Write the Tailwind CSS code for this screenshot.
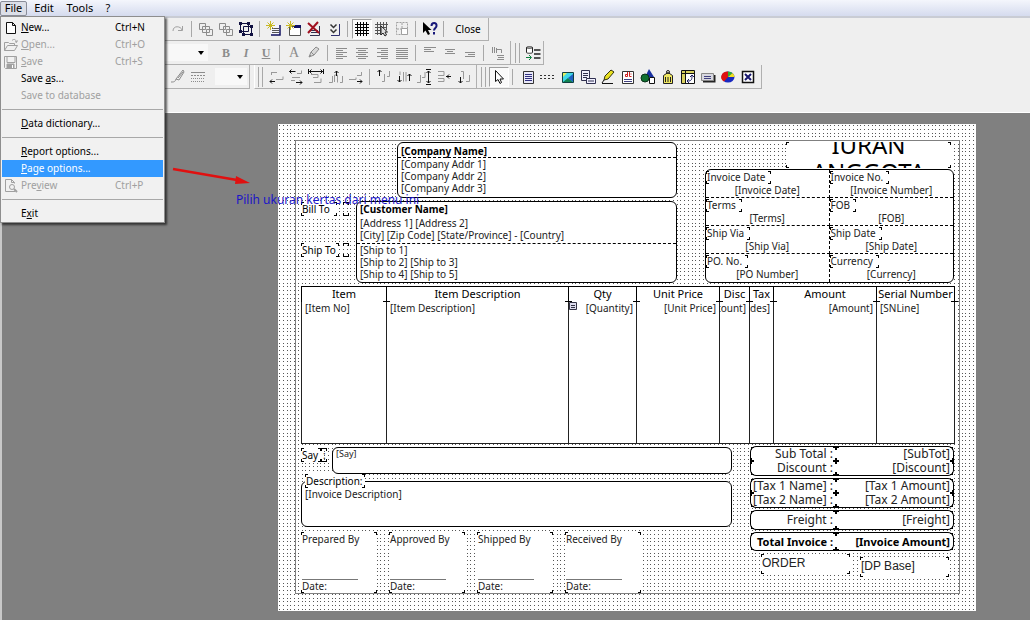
<!DOCTYPE html>
<html lang="en">
<head>
  <meta charset="UTF-8">
  <meta name="viewport" content="width=device-width, initial-scale=1.0">
  <title>Report Designer</title>
  <script src="https://cdn.jsdelivr.net/npm/@tailwindcss/browser@4"></script>
</head>
<body class="h-screen flex flex-col overflow-hidden bg-[#efefef] font-['Noto_Sans',sans-serif] text-[10px] leading-3 text-black">

  <!-- Menu bar -->
  <nav class="relative z-20 h-4 shrink-0 flex items-center bg-linear-to-b from-[#f4f6fc] to-[#d5dbee] text-[11px]">
    <button class="h-[15px] w-[27px] rounded-xs border border-[#8a8d99] bg-[#dcdfe8]">File</button>
    <button class="h-[15px] w-[34px]">Edit</button>
    <button class="h-[15px] w-[38px]">Tools</button>
    <button class="h-[15px] w-[18px]">?</button>

    <!-- File menu -->
    <div role="menu" class="absolute left-0 top-4 w-[165px] border border-[#8e8e8e] bg-[#f1f1f1] p-px pt-0.5 pb-0 text-[10px] leading-[17px] shadow-[2px_2px_2px_rgba(0,0,0,0.6)]">
      <button role="menuitem" class="flex w-full items-center">
        <svg class="ml-0.5 mr-[3px] size-[14px]" viewBox="0 0 14 14" fill="#fff" stroke="#111"><path d="M2.5 1.5h6l3 3v8h-9zM8.5 1.5v3h3"/></svg>
        <span class="w-[94px] text-left"><u>N</u>ew...</span><span>Ctrl+N</span>
      </button>
      <button role="menuitem" disabled class="flex w-full items-center text-[#a0a0a0]">
        <svg class="ml-0.5 mr-[3px] size-[14px]" viewBox="0 0 14 14" fill="none" stroke="#a0a0a0"><path d="M.5 12.5v-8h4l1 1h5v2M.5 12.5l3-5h10l-3 5zM8 2.5c2-2 4-1 4.500 1.500M11 3.500l1.500 1L13.500 2.500"/></svg>
        <span class="w-[94px] text-left"><u>O</u>pen...</span><span>Ctrl+O</span>
      </button>
      <button role="menuitem" disabled class="flex w-full items-center text-[#a0a0a0]">
        <svg class="ml-0.5 mr-[3px] size-[14px]" viewBox="0 0 14 14" fill="none" stroke="#a0a0a0"><path d="M.5 1.5h12v12h-11l-1-1zM3 1.5v6h8v-6"/><path d="M3 9h7v4H3z" fill="#a0a0a0"/><path d="M8.5 10v3" stroke="#fff"/></svg>
        <span class="w-[94px] text-left"><u>S</u>ave</span><span>Ctrl+S</span>
      </button>
      <button role="menuitem" class="block w-full pl-[19px] text-left">Save <u>a</u>s...</button>
      <button role="menuitem" disabled class="block w-full pl-[19px] text-left text-[#a0a0a0]">Save to database</button>
      <hr class="my-[5px] border-[#a8a8a8]">
      <button role="menuitem" class="block w-full pl-[19px] text-left"><u>D</u>ata dictionary...</button>
      <hr class="my-[5px] border-[#a8a8a8]">
      <button role="menuitem" class="block w-full pl-[19px] text-left"><u>R</u>eport options...</button>
      <button role="menuitem" class="block w-full bg-[#3399ff] pl-[19px] text-left text-white"><u>P</u>age options...</button>
      <button role="menuitem" disabled class="flex w-full items-center text-[#a0a0a0]">
        <svg class="ml-0.5 mr-[3px] size-[14px]" viewBox="0 0 14 14" fill="none" stroke="#a0a0a0"><path d="M11 12.5H1.5v-12h6l3 3v1M7.5.5v3h3"/><circle cx="8" cy="8" r="2.5"/><path d="M10 10l3 3" stroke-width="2"/></svg>
        <span class="w-[94px] text-left">Pre<u>v</u>iew</span><span>Ctrl+P</span>
      </button>
      <hr class="my-[5px] border-[#a8a8a8]">
      <button role="menuitem" class="block w-full pl-[19px] text-left">E<u>x</u>it</button>
    </div>
  </nav>

  <!-- Toolbars -->
  <header class="h-[97px] shrink-0 border-t-2 border-b border-t-[#c9ccd4] border-b-[#fff]">
    <!-- Row 1: edit, bands, grid -->
    <div class="flex w-fit h-[23px] items-center border-r border-b border-[#b0b0b0] pl-[168px]">
      <button class="size-5 grid place-items-center" aria-label="Redo"><svg class="size-4" viewBox="0 0 16 16" fill="none" stroke="#a0a0a0"><path d="M3 10c0-6 8-5 9-1M12.5 5v4.500H8"/></svg></button>
      <span class="ml-[3px] mr-1 h-4 w-px bg-[#a8a8a8]"></span>
      <button class="size-5 grid place-items-center" aria-label="Bring to front"><svg class="size-4" viewBox="0 0 16 16" fill="#efefef" stroke="#8c8c8c"><path d="M1.5 2.5h6v6h-6zM8.5 8.5h6v6h-6zM4.5 5.5h7v6h-7z"/></svg></button>
      <button class="size-5 grid place-items-center" aria-label="Send to back"><svg class="size-4" viewBox="0 0 16 16" fill="#efefef" stroke="#8c8c8c"><path d="M5.5 5.5h6v6h-6zM1.5 2.5h6v6h-6zM8.5 8.5h6v6h-6z"/></svg></button>
      <button class="size-5 grid place-items-center" aria-label="Group"><svg class="size-4" viewBox="0 0 16 16" fill="none" stroke="#101040"><path d="M2.5 2.5h8v8h-8zM5.5 5.5h8v8h-8z"/><path d="M1 1h3v3H1zM9 1h3v3H9zM1 9h3v3H1zM12 4h3v3h-3zM4 12h3v3H4zM12 12h3v3h-3z" fill="#101040" stroke="none"/></svg></button>
      <span class="ml-[3px] mr-1 h-4 w-px bg-[#a8a8a8]"></span>
      <button class="size-5 grid place-items-center" aria-label="Add band"><svg class="size-4" viewBox="0 0 16 16" fill="none"><path d="M5 4h9v10H5z" fill="#f5f5ff"/><path d="M14 4v10H5" stroke="#101060" stroke-width="1.500"/><path d="M6 7.5h7M6 9.5h7M6 11.5h7" stroke="#555"/><path d="M4.5 0v9M0 4.5h9M1.5 1.5l6 6M7.5 1.5l-6 6" stroke="#c8b820"/></svg></button>
      <button class="size-5 grid place-items-center" aria-label="Add section"><svg class="size-4" viewBox="0 0 16 16" fill="none"><path d="M3.5 5.5h11v9h-11z" fill="#fff" stroke="#555"/><path d="M8 4h7v3H8z" fill="#101060"/><path d="M4.5 0v9M0 4.5h9M1.5 1.5l6 6M7.5 1.5l-6 6" stroke="#c8b820"/></svg></button>
      <button class="size-5 grid place-items-center" aria-label="Delete band"><svg class="size-4" viewBox="0 0 16 16" fill="none"><path d="M13.5 5v9.500H4M5 9.5h7M5 11.5h7" stroke="#303050"/><path d="M2 2l11 10M12 1L2 12" stroke="#a01020" stroke-width="2"/></svg></button>
      <button class="size-5 grid place-items-center" aria-label="Move down"><svg class="size-4" viewBox="0 0 16 16" fill="none"><path d="M13.5 3v11.500H5" stroke="#303070"/><path d="M4.5 3.5l3 3 3-3M4.5 8.5l3 3 3-3" stroke="#333" stroke-width="1.500"/></svg></button>
      <span class="ml-[3px] mr-1 h-4 w-px bg-[#a8a8a8]"></span>
      <button class="size-5 grid place-items-center border border-[#a0a0a0] border-r-white border-b-white bg-[#fafafa]" aria-label="Show grid"><svg class="size-4" viewBox="0 0 16 16" stroke="#000"><path d="M3.5 1v14M6.5 1v14M9.5 1v14M12.5 1v14M1 3.5h14M1 6.5h14M1 9.5h14M1 12.5h14"/></svg></button>
      <button class="size-5 grid place-items-center" aria-label="Snap to grid"><svg class="size-4" viewBox="0 0 16 16" stroke="#555"><path d="M3.5 1v13M6.5 1v13M9.5 1v6M12.5 1v8M1 3.5h13M1 6.5h12M1 9.5h6M1 12.5h6"/><path d="M7 5v9l2-2 2 3 1.500-1L11 11h2.500z" fill="#ddd" stroke="#222"/></svg></button>
      <button class="size-5 grid place-items-center" aria-label="Align to grid"><svg class="size-4" viewBox="0 0 16 16" fill="none" stroke="#a0a0a0"><path d="M2.5 1.5h11v12h-11zM8 2v12M3 8h10" stroke-dasharray="2 1"/><path d="M7.5 7.5h6v6h-6z" fill="#fff"/></svg></button>
      <span class="ml-[3px] mr-1 h-4 w-px bg-[#a8a8a8]"></span>
      <button class="size-5 grid place-items-center" aria-label="Context help"><svg class="size-4" viewBox="0 0 16 16"><path d="M1 1v11l2.500-2.500L6 14l2-1-2-4h3.500z" fill="#000"/><path d="M9.5 5c0-4 5.500-4 5 0 0 2-2.500 2-2.500 4.500M12 11v2.500" fill="none" stroke="#18187a" stroke-width="2"/></svg></button>
      <span class="ml-[3px] mr-1 h-4 w-px bg-[#a8a8a8]"></span>
      <button class="h-5 w-10">Close</button>
    </div>

    <!-- Row 2: text formatting -->
    <div class="flex h-6">
      <div class="flex items-center border-r border-b border-[#b0b0b0] pl-[160px]">
        <div class="relative mr-2 h-[17px] w-12">
          <select aria-label="Font size" class="block size-full appearance-none bg-[#f8f8f8]"><option></option></select>
          <svg class="pointer-events-none absolute right-1 top-[6px] size-[6px]" viewBox="0 0 6 6"><path d="M0 1h6L3 5z"/></svg>
        </div>
        <button class="size-5 font-['Liberation_Serif',serif] text-[12px] font-bold text-[#8c8c8c]">B</button>
        <button class="size-5 font-['Liberation_Serif',serif] text-[12px] font-bold italic text-[#8c8c8c]">I</button>
        <button class="size-5 font-['Liberation_Serif',serif] text-[12px] font-bold text-[#8c8c8c] underline">U</button>
        <span class="ml-[3px] mr-1 h-4 w-px bg-[#a8a8a8]"></span>
        <button class="size-5 font-['Liberation_Serif',serif] text-[14px] text-[#8c8c8c]">A</button>
        <button class="size-5 grid place-items-center" aria-label="Highlight colour"><svg class="size-4" viewBox="0 0 16 16" fill="none" stroke="#8c8c8c"><path d="M3 12l2-5 5-5 3 2-5 6z" fill="#d8d8d8"/><path d="M5 7l3 3M3 12l2-2"/></svg></button>
        <span class="ml-[3px] mr-1 h-4 w-px bg-[#a8a8a8]"></span>
        <button class="size-5 grid place-items-center" aria-label="Align left"><svg class="size-4" viewBox="0 0 16 16" stroke="#8c8c8c"><path d="M2 3.5h11M2 5.5h7M2 7.5h11M2 9.5h7M2 11.5h11M2 13.5h7"/></svg></button>
        <button class="size-5 grid place-items-center" aria-label="Align centre"><svg class="size-4" viewBox="0 0 16 16" stroke="#8c8c8c"><path d="M2 3.5h12M4 5.5h8M2 7.5h12M4 9.5h8M2 11.5h12M4 13.5h8"/></svg></button>
        <button class="size-5 grid place-items-center" aria-label="Align right"><svg class="size-4" viewBox="0 0 16 16" stroke="#8c8c8c"><path d="M3 3.5h11M7 5.5h7M3 7.5h11M7 9.5h7M3 11.5h11M7 13.5h7"/></svg></button>
        <button class="size-5 grid place-items-center" aria-label="Justify"><svg class="size-4" viewBox="0 0 16 16" stroke="#8c8c8c"><path d="M2 3.5h12M2 5.5h12M2 7.5h12M2 9.5h12M2 11.5h12M2 13.5h12"/></svg></button>
        <span class="ml-[3px] mr-1 h-4 w-px bg-[#a8a8a8]"></span>
        <button class="size-5 grid place-items-center" aria-label="Align top"><svg class="size-4" viewBox="0 0 16 16" stroke="#8c8c8c"><path d="M2 2.5h12M2 4.5h7M2 6.5h10"/></svg></button>
        <button class="size-5 grid place-items-center" aria-label="Align middle"><svg class="size-4" viewBox="0 0 16 16" stroke="#8c8c8c"><path d="M3 4.5h10M5 6.5h6M3 8.5h10"/></svg></button>
        <button class="size-5 grid place-items-center" aria-label="Align bottom"><svg class="size-4" viewBox="0 0 16 16" stroke="#8c8c8c"><path d="M3 7.5h10M6 9.5h7M3 11.5h10"/></svg></button>
        <span class="ml-[3px] mr-1 h-4 w-px bg-[#a8a8a8]"></span>
        <button class="mr-0.5 size-5 grid place-items-center" aria-label="Rotate text"><svg class="size-4" viewBox="0 0 16 16" fill="none" stroke="#8c8c8c"><path d="M2.5 2v6M4.5 2v6M6.5 3v5M7 4.5h4.500V8M7 10.5h7M8 12.5h6M7 14.5h7"/></svg></button>
      </div>
      <div class="flex items-center border-r border-b border-[#b0b0b0] pl-1">
        <span class="mr-[3px] h-5 w-[5px] border-x border-[#a8a8a8]"></span>
        <button class="size-5 grid place-items-center" aria-label="Data fields"><svg class="size-4" viewBox="0 0 16 16" fill="#fff" stroke="#222"><path d="M1.5 2.5c0-1 6-1 6 0v5c0 1-6 1-6 0zM1.5 2.5c0 1 6 1 6 0"/><path d="M9 4.500h6.500M9 5.500h6.500M9 8.500h6.500M9 9.500h6.500M9 12.500h6.500M9 13.500h6.500" stroke="#555"/><path d="M1 12.5h5M4 10l2.500 2.500L4 15" fill="none" stroke="#108040"/></svg></button>
      </div>
    </div>

    <!-- Row 3: lines, alignment, report objects -->
    <div class="flex h-6">
      <div class="flex items-center border-r border-b border-[#b0b0b0] pl-[168px] pr-0.5">
        <button class="size-5 grid place-items-center" aria-label="Line colour"><svg class="size-4" viewBox="0 0 16 16" fill="none" stroke="#8c8c8c"><path d="M6 10l7-9 1 2-5 8zM6 10c-1 3-2 3-5 3"/><path d="M8 9l5-6"/></svg></button>
        <button class="mr-[7px] size-5 grid place-items-center" aria-label="Line style"><svg class="size-4" viewBox="0 0 16 16" stroke="#8c8c8c"><path d="M1 3.5h14"/><path d="M1 6.5h14" stroke-dasharray="2 1"/><path d="M1 9.5h14M1 12.5h14" stroke-dasharray="1 1"/></svg></button>
        <div class="relative h-[17px] w-8">
          <select aria-label="Line width" class="block size-full appearance-none bg-[#f8f8f8]"><option></option></select>
          <svg class="pointer-events-none absolute right-1 top-[6px] size-[6px]" viewBox="0 0 6 6"><path d="M0 1h6L3 5z"/></svg>
        </div>
      </div>
      <div class="ml-1 flex items-center border-r border-b border-l border-[#b0b0b0] border-l-white pl-[3px] pr-0.5">
        <span class="mr-[3px] h-5 w-[5px] border-x border-[#a8a8a8]"></span>
        <button class="size-5 grid place-items-center" aria-label="Left edges"><svg class="size-4" viewBox="0 0 16 16" fill="none"><path d="M3 3.5h6M3.5 3v3M8 10.5h7v-3" stroke="#999"/><path d="M2 12.5h5M4 10.5l-2 2 2 2" stroke="#111"/></svg></button>
        <button class="size-5 grid place-items-center" aria-label="Centre horizontally"><svg class="size-4" viewBox="0 0 16 16" fill="none"><path d="M9 4.5h4.500v-3M4 8.5h8M3 11.500h4" stroke="#999"/><path d="M1.5 2.5h6M3.5.5l-2 2 2 2M8 13.5h6M12 11.5l2 2-2 2" stroke="#111"/></svg></button>
        <button class="size-5 grid place-items-center" aria-label="Space horizontally"><svg class="size-4" viewBox="0 0 16 16" fill="none"><path d="M3 5.5h7v3H5M6 13.5h7v-4" stroke="#999"/><path d="M1 2.5h14M3.5.5l-2 2 2 2M12.5.5l2 2-2 2M.5 0v5M15.5 0v5" stroke="#111"/></svg></button>
        <button class="size-5 grid place-items-center" aria-label="Centre in band"><svg class="size-4" viewBox="0 0 16 16" fill="none"><path d="M1 13.5h3.500V7M6.5 13V6h3v7.500M12 13.5h2.500V7" stroke="#999"/><path d="M8.5 2v5M6.5 4l2-2 2 2" stroke="#111"/></svg></button>
        <button class="size-5 grid place-items-center" aria-label="Right edges"><svg class="size-4" viewBox="0 0 16 16" fill="none"><path d="M1 10.5h7v-2M9 6.5h4.500V3" stroke="#999"/><path d="M9 12.5h5M12 10.5l2 2-2 2" stroke="#111"/></svg></button>
        <span class="ml-[3px] mr-1 h-4 w-px bg-[#a8a8a8]"></span>
        <button class="size-5 grid place-items-center" aria-label="Top edges"><svg class="size-4" viewBox="0 0 16 16" fill="none"><path d="M6 12.5h2.500V5M11 7.5h2.500V2" stroke="#999"/><path d="M3.5 1v6M1.5 3l2-2 2 2" stroke="#111"/></svg></button>
        <button class="size-5 grid place-items-center" aria-label="Centre vertically"><svg class="size-4" viewBox="0 0 16 16" fill="none"><path d="M4 6V2.500M7.500 12.5V3M10 12.5V3" stroke="#999"/><path d="M3.5 7v6M1.5 11l2 2 2-2M13.5 12V5M11.5 7l2-2 2 2" stroke="#111"/></svg></button>
        <button class="size-5 grid place-items-center" aria-label="Space vertically"><svg class="size-4" viewBox="0 0 16 16" fill="none"><path d="M1 13.5h3.500V6M6 8.5h3V3" stroke="#999"/><path d="M12.5 2v12M10.5 4l2-2 2 2M10.5 12l2 2 2-2M10 .5h5M10 15.5h5" stroke="#111"/></svg></button>
        <button class="size-5 grid place-items-center" aria-label="Middle of page"><svg class="size-4" viewBox="0 0 16 16" fill="none"><path d="M2 2.5h6v4H2M2 9.5h6v3H2" stroke="#999"/><path d="M10 7.5h5M13 5.5l-2 2 2 2" stroke="#111"/></svg></button>
        <button class="size-5 grid place-items-center" aria-label="Bottom edges"><svg class="size-4" viewBox="0 0 16 16" fill="none"><path d="M5 2.5h2.500V10M10 12.5h3.500V6" stroke="#999"/><path d="M4.5 8v6M2.5 12l2 2 2-2" stroke="#111"/></svg></button>
      </div>
      <div class="flex items-center border-r border-b border-[#b0b0b0] pl-1 pr-[3px]">
        <span class="mr-[3px] h-5 w-[5px] border-x border-[#a8a8a8]"></span>
        <button class="size-5 grid place-items-center border border-[#a0a0a0] border-r-white border-b-white bg-[#fafafa]" aria-label="Select"><svg class="size-4" viewBox="0 0 16 16"><path d="M4.5 1.5v11l2.500-2 2 4 1.500-1-1.500-3.500h3.500z" fill="#fff" stroke="#111"/></svg></button>
        <span class="ml-[3px] mr-[5px] h-4 w-px bg-[#a8a8a8]"></span>
        <button class="size-5 grid place-items-center" aria-label="Label"><svg class="size-4" viewBox="0 0 16 16"><path d="M3.5 2.5h10v12h-10z" fill="#e8e8f8" stroke="#333"/><path d="M5 5.5h7M5 7.5h7M5 9.5h7M5 11.5h7" stroke="#303080"/></svg></button>
        <button class="size-5 grid place-items-center" aria-label="Line"><svg class="size-4" viewBox="0 0 16 16" stroke="#333"><path d="M0 6.5h16M0 9.5h16" stroke-dasharray="2 2"/></svg></button>
        <button class="size-5 grid place-items-center" aria-label="Image"><svg class="size-4" viewBox="0 0 16 16"><path d="M2.5 3.5h11v10h-11z" fill="#40d8e8" stroke="#104040"/><path d="M3 4h4L3 8z" fill="#e8f060"/><path d="M3 13l5-4 5 4z" fill="#108050"/><path d="M8 9l5-4v8z" fill="#2060c0"/></svg></button>
        <button class="size-5 grid place-items-center" aria-label="Sub-report"><svg class="size-4" viewBox="0 0 16 16" fill="#f0f0ff" stroke="#303050"><path d="M1.5 1.5h8v10h-8zM3 4.5h5M3 6.5h5M3 8.5h4"/><path d="M6.5 9.5h9v5h-9zM8 12h6"/></svg></button>
        <button class="size-5 grid place-items-center" aria-label="Drawing"><svg class="size-4" viewBox="0 0 16 16"><path d="M4 11l1-4 6-6 3 2-6 7z" fill="#e8e020" stroke="#303010"/><path d="M4 11l-2 3M2 14.5h11" stroke="#111"/></svg></button>
        <button class="size-5 grid place-items-center" aria-label="Rich text"><svg class="size-4" viewBox="0 0 16 16"><path d="M2.5 2.5h11v12h-11z" fill="#fff" stroke="#333"/><path d="M7.5 3v4.500H5.500v-2h2M9.500 3v4.500h2M10.500 5h1" fill="none" stroke="#d02020"/><path d="M4 10.5h8M4 12.5h8" stroke="#404080"/></svg></button>
        <button class="size-5 grid place-items-center" aria-label="Shape"><svg class="size-4" viewBox="0 0 16 16"><path d="M9 0l5 8H5z" fill="#1830a0"/><circle cx="5" cy="9" r="4" fill="#107030" stroke="#083018"/><path d="M9.5 8.5h5v6h-5z" fill="#fff" stroke="#111"/></svg></button>
        <button class="size-5 grid place-items-center" aria-label="Barcode"><svg class="size-4" viewBox="0 0 16 16"><path d="M3.5 14.5v-8l4.500-3 4.500 3v8z" fill="#f0e860" stroke="#222"/><circle cx="8" cy="3" r="1.500" fill="none" stroke="#222"/><path d="M5.5 8v5M8 8v5M10.5 8v5" stroke="#222"/></svg></button>
        <button class="size-5 grid place-items-center" aria-label="Cross table"><svg class="size-4" viewBox="0 0 16 16"><path d="M1.5 1.5h13v13h-13z" fill="#fff" stroke="#111"/><path d="M2 2h12v2H2zM2 4h3v10H2z" fill="#d8d060"/><path d="M5.5 2v12M2 4.5h12" stroke="#111"/><path d="M8 12c3 0 4-1 4-5M10 8l2-2 2 2M9 10l-2 2 2 2" fill="none" stroke="#202060"/></svg></button>
        <button class="size-5 grid place-items-center" aria-label="Button"><svg class="size-4" viewBox="0 0 16 16"><path d="M3 12.5h11.500V6" fill="none" stroke="#222" stroke-width="2"/><path d="M1.5 4.5h12v7h-12z" fill="#d8d8e0" stroke="#888"/><path d="M4 7.5h7M4 9.5h7" stroke="#404080"/></svg></button>
        <button class="size-5 grid place-items-center" aria-label="Chart"><svg class="size-4" viewBox="0 0 16 16"><ellipse cx="8" cy="8" rx="6.500" ry="5.500" fill="#1828c0"/><path d="M8 8V2.500a6.500 5.500 0 0 0-4 10z" fill="#e01010"/><path d="M8 8V2.500a6.500 5.500 0 0 1 4.500 1.500z" fill="#30b030"/><path d="M8 8l4.500-4a6.500 5.500 0 0 1 2 4z" fill="#f0e020"/></svg></button>
        <button class="size-5 grid place-items-center" aria-label="Expression"><svg class="size-4" viewBox="0 0 16 16"><path d="M2.5 2.5h11v11h-11z" fill="#fff" stroke="#111" stroke-width="1.500"/><path d="M5 5l6 6M11 5l-6 6" stroke="#181870" stroke-width="2"/></svg></button>
      </div>
    </div>
  </header>

  <!-- Design surface -->
  <main class="relative grow border-l-2 border-[#c8c8c8] bg-[#808080] pl-[276px] pt-[11px]">
    <div class="relative h-[487px] w-[698px] bg-white">
      <svg class="absolute inset-0 size-full" shape-rendering="crispEdges">
        <pattern id="dots" width="15" height="15" patternUnits="userSpaceOnUse">
          <path d="M1 1.500h1M5 1.500h1M9 1.500h1M12 1.500h1M1 5.500h1M5 5.500h1M9 5.500h1M12 5.500h1M1 9.500h1M5 9.500h1M9 9.500h1M12 9.500h1M1 12.500h1M5 12.500h1M9 12.500h1M12 12.500h1" stroke="#555"/>
        </pattern>
        <rect width="100%" height="100%" fill="url(#dots)"/>
      </svg>
      <div class="absolute left-[17px] top-4 h-[454px] w-[665px] border border-[#808080]"></div>

      <!-- Company -->
      <section class="absolute left-[119px] top-[18px] h-[56px] w-[280px] rounded-md border border-black bg-white text-[#222]">
        <h2 class="h-[15px] border-b border-dashed border-black pl-[3px] font-bold leading-4 text-black">[Company Name]</h2>
        <p class="pl-[3px]">[Company Addr 1]<br>[Company Addr 2]<br>[Company Addr 3]</p>
      </section>

      <!-- Customer -->
      <section class="absolute left-[78px] top-[77px] h-[82px] w-[321px] rounded-md border border-black bg-white text-[#222]">
        <div class="h-[42px] border-b border-dashed border-black pl-[3px]">
          <h2 class="h-[15px] font-bold leading-[15px] text-black">[Customer Name]</h2>
          <p>[Address 1] [Address 2]<br>[City] [Zip Code] [State/Province] - [Country]</p>
        </div>
        <p class="pl-[3px]">[Ship to 1]<br>[Ship to 2] [Ship to 3]<br>[Ship to 4] [Ship to 5]</p>
      </section>
      <p class="absolute left-[23px] top-[78px] w-[36px] bg-white pl-px leading-[14px]" data-frame>Bill To</p>
      <p class="absolute left-[65px] top-[78px] h-[14px] w-[6px]" data-frame></p>
      <p class="absolute left-[23px] top-[119px] w-[38px] bg-white pl-px leading-[14px]" data-frame>Ship To</p>
      <p class="absolute left-[65px] top-[119px] h-[14px] w-[6px]" data-frame></p>

      <!-- Form title -->
      <div class="absolute left-[508px] top-[18px] h-[26px] w-[165px] overflow-hidden bg-white" data-frame>
        <h1 class="-mt-[11px] text-center text-[24px] leading-[27px]">IURAN<br>ANGGOTA</h1>
      </div>

      <!-- Invoice details -->
      <section class="absolute left-[427px] top-[45px] grid h-[114px] w-[249px] grid-cols-2 grid-rows-4 rounded-md border border-black bg-white text-[#222] [&>div]:border-dashed [&>div]:border-black [&>div]:pt-px [&>div]:leading-[13px] [&_span]:block [&_span]:w-fit [&_span]:pl-px [&_span]:pr-[6px] [&_p]:text-center">
        <div class="border-r border-b"><span data-frame>Invoice Date</span><p>[Invoice Date]</p></div>
        <div class="border-b"><span data-frame>Invoice No.</span><p>[Invoice Number]</p></div>
        <div class="border-r border-b"><span data-frame>Terms</span><p>[Terms]</p></div>
        <div class="border-b"><span data-frame>FOB</span><p>[FOB]</p></div>
        <div class="border-r border-b"><span data-frame>Ship Via</span><p>[Ship Via]</p></div>
        <div class="border-b"><span data-frame>Ship Date</span><p>[Ship Date]</p></div>
        <div class="border-r"><span data-frame>PO. No.</span><p>[PO Number]</p></div>
        <div><span data-frame>Currency</span><p>[Currency]</p></div>
      </section>

      <!-- Item lines -->
      <table class="absolute left-[23px] top-[162px] h-[158px] w-[653px] table-fixed border-collapse bg-white [&_td]:overflow-hidden [&_td]:border-x [&_td]:px-[3px] [&_td]:align-top [&_td]:whitespace-nowrap [&_th]:relative [&_th]:border-x [&_th]:border-t [&_th]:font-normal [&_th]:whitespace-nowrap [&_th]:after:absolute [&_th]:after:-right-1 [&_th]:after:bottom-0 [&_th]:after:h-px [&_th]:after:w-[7px] [&_th]:after:bg-black">
        <thead>
          <tr class="h-[15px] text-[11px] leading-[14px]">
            <th class="w-[85px]">Item</th>
            <th class="w-[182px]">Item Description</th>
            <th class="w-[68px]">Qty</th>
            <th class="w-[83px]">Unit Price</th>
            <th class="w-[30px]">Disc</th>
            <th class="w-[24px]">Tax</th>
            <th class="w-[103px]">Amount</th>
            <th class="w-[78px]">Serial Number</th>
          </tr>
        </thead>
        <tbody>
          <tr class="border-b text-[#222]">
            <td>[Item No]</td>
            <td>[Item Description]</td>
            <td class="relative text-right"><svg class="absolute left-0 top-0 size-2" viewBox="0 0 8 8"><path d="M.5.5h7v7h-7z" fill="#dde" stroke="#334"/><path d="M2 3.5h4M2 5.5h4" stroke="#334"/></svg>[Quantity]</td>
            <td class="text-right">[Unit Price]</td>
            <td><div class="-ml-[3px] flex justify-end overflow-hidden">[Discount]</div></td>
            <td><div class="-ml-[3px] flex justify-end overflow-hidden">[Tax Codes]</div></td>
            <td class="text-right">[Amount]</td>
            <td>[SNLine]</td>
          </tr>
        </tbody>
      </table>

      <!-- Say and description -->
      <p class="absolute left-[23px] top-[324px] w-[20px] bg-white pl-px leading-[14px]" data-frame>Say</p>
      <p class="absolute left-[43px] top-[324px] w-[6px] pl-0.5 leading-[14px]" data-frame>:</p>
      <div class="absolute left-[54px] top-[323px] h-[27px] w-[400px] rounded-md border border-black bg-white pl-[3px] text-[9px] text-[#222]">[Say]</div>
      <div class="absolute left-[23px] top-[357px] h-[46px] w-[431px] rounded-md border border-black bg-white pl-[3px] pt-[6px] text-[#222]">[Invoice Description]</div>
      <p class="absolute left-[27px] top-[350px] w-[60px] bg-white pl-px leading-[14px]" data-frame>Description:</p>

      <!-- Totals -->
      <section class="absolute left-[472px] top-[322px] flex w-[204px] flex-col gap-[2px] text-right text-[12px] leading-[14px] text-[#222] [&>dl]:grid [&>dl]:grid-cols-[85px_1fr] [&>dl]:rounded-md [&>dl]:border [&>dl]:border-black [&>dl]:bg-white [&_dd]:pr-[3px] [&_dt]:whitespace-nowrap [&_dt]:pr-[3px]">
        <dl><dt data-frame>Sub Total :</dt><dd data-frame>[SubTot]</dd><dt data-frame>Discount :</dt><dd data-frame>[Discount]</dd></dl>
        <dl><dt data-frame>[Tax 1 Name] :</dt><dd data-frame>[Tax 1 Amount]</dd><dt data-frame>[Tax 2 Name] :</dt><dd data-frame>[Tax 2 Amount]</dd></dl>
        <dl class="leading-[18px]"><dt data-frame>Freight :</dt><dd data-frame>[Freight]</dd></dl>
        <dl class="text-[11px] leading-[17px] font-bold text-black"><dt data-frame>Total Invoice :</dt><dd data-frame>[Invoice Amount]</dd></dl>
      </section>
      <p class="absolute left-[483px] top-[430px] h-[20px] w-[89px] bg-white pl-px font-['Liberation_Sans',sans-serif] text-[12px] leading-[18px] text-[#222]" data-frame>ORDER</p>
      <p class="absolute left-[582px] top-[433px] h-[20px] w-[89px] bg-white pl-px font-['Liberation_Sans',sans-serif] text-[12px] leading-[18px] text-[#222]" data-frame>[DP Base]</p>

      <!-- Signatures -->
      <div class="absolute left-[23px] top-[408px] flex gap-3 leading-[13px] text-[#222] [&>div]:flex [&>div]:h-[61px] [&>div]:w-[76px] [&>div]:flex-col [&>div]:bg-white [&>div]:pl-px [&>div]:pt-px [&_hr]:mt-auto [&_hr]:w-[56px] [&_hr]:border-[#777]">
        <div data-frame><p>Prepared By</p><hr><p>Date:</p></div>
        <div data-frame><p>Approved By</p><hr><p>Date:</p></div>
        <div data-frame><p>Shipped By</p><hr><p>Date:</p></div>
        <div data-frame><p>Received By</p><hr><p>Date:</p></div>
      </div>
    </div>

    <!-- Callout -->
    <svg class="absolute left-[170px] top-[50px] h-[26px] w-[80px]" viewBox="0 0 80 26"><path d="M1 6l64 11" stroke="#e01010" stroke-width="2.500"/><path d="M64 13l14 7-15 1z" fill="#e01010"/></svg>
    <p class="absolute left-[234px] top-[79px] text-[12px] leading-4 whitespace-nowrap text-[#1a14c8]">Pilih ukuran kertas dari menu ini</p>
  </main>

  <script>
    // Corner marks around each report object
    document.querySelectorAll('[data-frame]').forEach(el => {
      if (!el.classList.contains('absolute')) el.classList.add('relative');
      el.insertAdjacentHTML('beforeend', `
        <i class="absolute left-0 top-0 size-[3px] border-t border-l border-black"></i>
        <i class="absolute right-0 top-0 size-[3px] border-t border-r border-black"></i>
        <i class="absolute bottom-0 left-0 size-[3px] border-b border-l border-black"></i>
        <i class="absolute bottom-0 right-0 size-[3px] border-b border-r border-black"></i>`);
    });
  </script>
</body>
</html>
